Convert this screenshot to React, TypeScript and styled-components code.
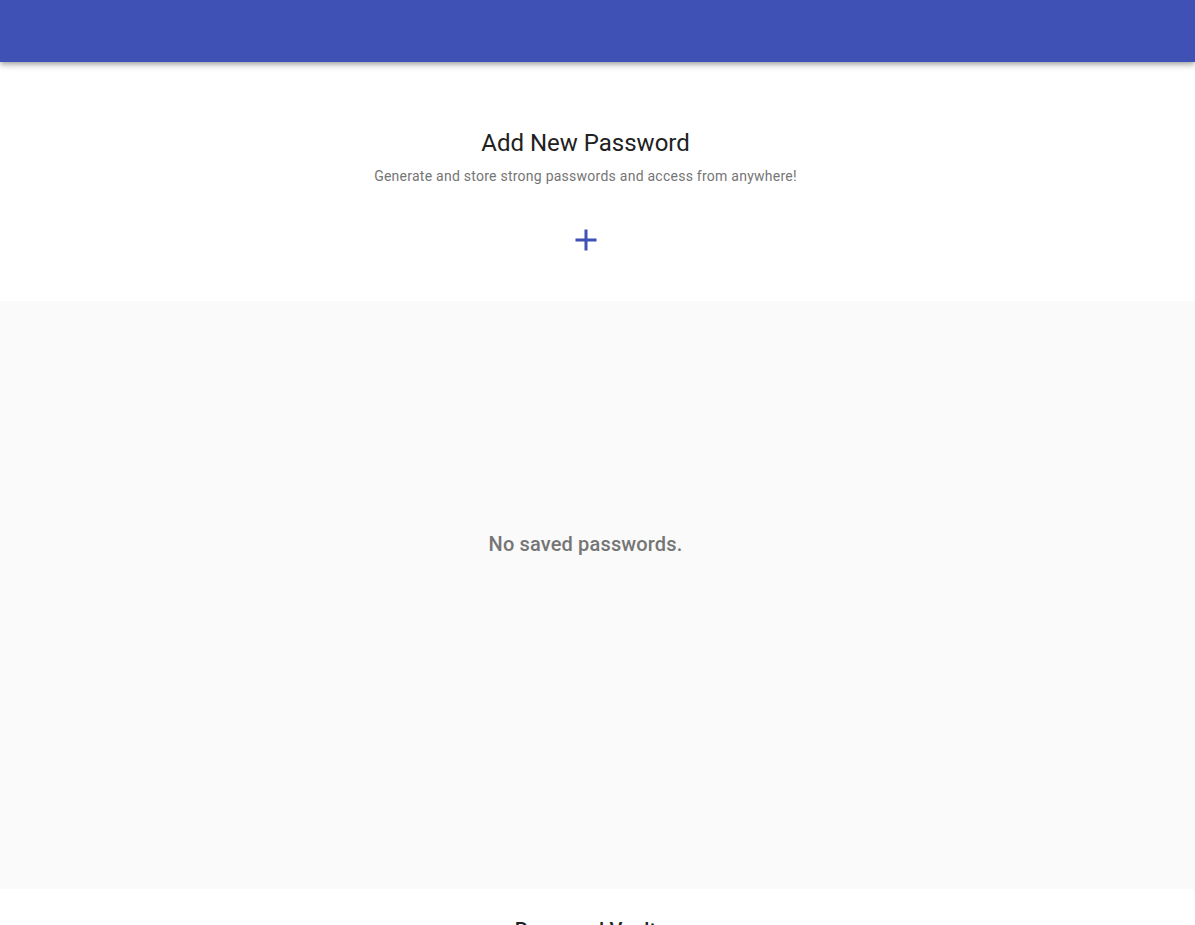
import React from 'react';
import styled, { createGlobalStyle } from 'styled-components';

const GlobalStyle = createGlobalStyle`
  body {
    margin: 0;
    font-family: Roboto, "Liberation Sans", Arial, sans-serif;
    background: #fff;
    color: #212121;
  }
`;

const AppBar = styled.header`
  height: 62px;
  background: #3f51b5;
  box-shadow: 0 2px 4px -1px rgba(0,0,0,0.2), 0 4px 5px 0 rgba(0,0,0,0.14), 0 1px 10px 0 rgba(0,0,0,0.12);
  position: relative;
  z-index: 2;
`;

const Hero = styled.section`
  background: #fff;
  padding: 65px 24px 43px 0;
  display: flex;
  flex-direction: column;
  align-items: center;
  text-align: center;
`;

const Title = styled.h1`
  margin: 0;
  font-size: 24px;
  line-height: 32px;
  font-weight: 400;
  color: #212121;
`;

const Subtitle = styled.p`
  margin: 7px 0 0;
  font-size: 14px;
  line-height: 20px;
  letter-spacing: 0.25px;
  color: #757575;
`;

const AddButton = styled.button`
  margin-top: 36px;
  width: 36px;
  height: 36px;
  padding: 0;
  border: none;
  background: transparent;
  color: #3f51b5;
  cursor: pointer;
  display: flex;
  align-items: center;
  justify-content: center;
`;

const Vault = styled.section`
  background: #fafafa;
  height: 588px;
  box-sizing: border-box;
  padding: 229px 24px 0 0;
  text-align: center;
`;

const EmptyText = styled.p`
  margin: 0;
  font-size: 20px;
  line-height: 28px;
  font-weight: 500;
  letter-spacing: 0.15px;
  color: #757575;
`;

const Footer = styled.section`
  background: #fff;
  padding: 27px 24px 40px 0;
  text-align: center;
`;

const FooterTitle = styled.h2`
  margin: 0;
  font-size: 20px;
  line-height: 28px;
  font-weight: 500;
  letter-spacing: 0.15px;
  color: #212121;
`;

const PlusIcon: React.FC = () => (
  <svg width="36" height="36" viewBox="0 0 24 24" fill="currentColor">
    <path d="M19 13h-6v6h-2v-6H5v-2h6V5h2v6h6v2z" />
  </svg>
);

const App: React.FC = () => {
  return (
    <>
      <GlobalStyle />
      <AppBar />
      <Hero>
        <Title>Add New Password</Title>
        <Subtitle>Generate and store strong passwords and access from anywhere!</Subtitle>
        <AddButton aria-label="Add password">
          <PlusIcon />
        </AddButton>
      </Hero>
      <Vault>
        <EmptyText>No saved passwords.</EmptyText>
      </Vault>
      <Footer>
        <FooterTitle>Password Vault</FooterTitle>
      </Footer>
    </>
  );
};

export default App;
